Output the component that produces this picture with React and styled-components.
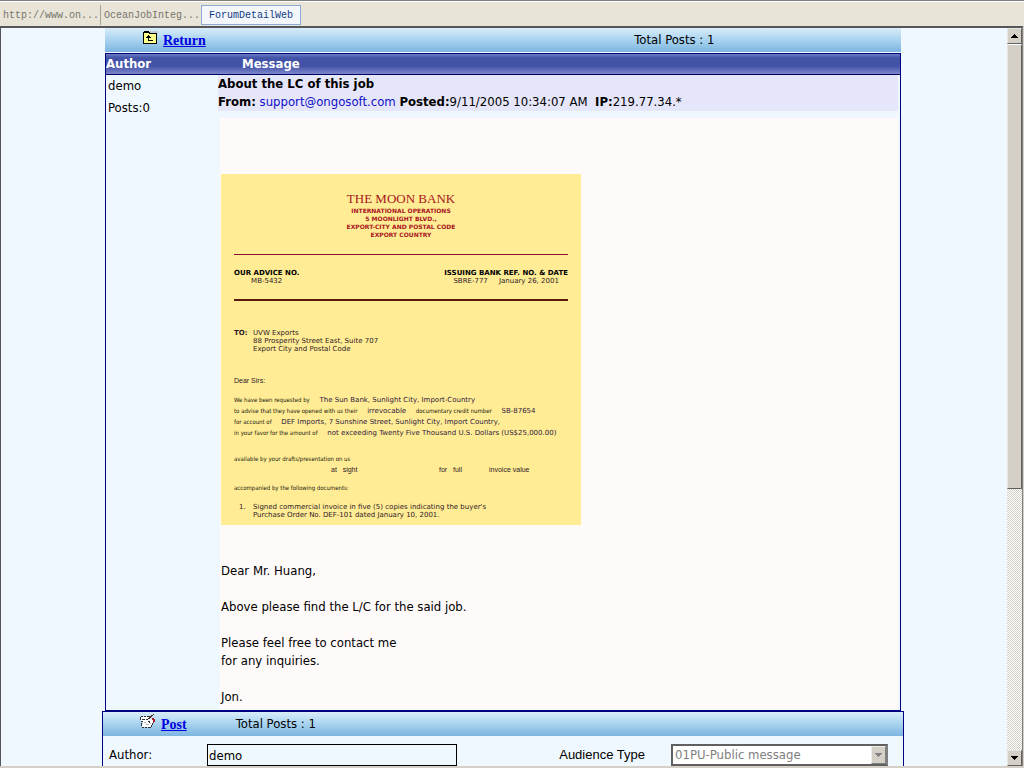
import React from 'react'
import styled, { createGlobalStyle } from 'styled-components'

const tabs = [
  { label: 'http://www.on...', divider: true },
  { label: 'OceanJobInteg...' },
  { label: 'ForumDetailWeb', active: true },
]

const FolderUpIcon = () => (
  <svg width="16" height="16" viewBox="0 0 16 16" shapeRendering="crispEdges" aria-hidden="true">
    <path d="M8 1h8v2H8z" fill="#c4ccd0" />
    <path d="M1 2h1V1h5v1h1v1h7v11H1z" fill="#000" />
    <path d="M2 3h5v1h7v9H2z" fill="#ffff8c" />
    <path d="M6 5h1v1h1v1h1v1H7v2h4v1H6V8H4V7h1V6h1z" fill="#000" />
  </svg>
)

const WriteIcon = () => (
  <svg width="16" height="16" viewBox="0 0 16 16" shapeRendering="crispEdges" aria-hidden="true">
    <path d="M1 3h9v2h3v4h-1v4H2v-3h1V7H1z" fill="#fff" />
    <path d="M1 2h2v1H1zM4 2h2v1H4zM7 2h3v1H7zM0 3h1v3H0zM2 5h3v1H2zM6 5h2v1H6zM1 7h2v1H1zM1 9h1v3H1zM2 13h2v1H2zM5 13h2v1H5zM8 13h3v1H8zM11 11h1v2h-1zM8 7h2v1H8zM9 8h1v1H9zM12 9h1v2h-1z" fill="#333" />
    <path d="M4 8h2v1H4zM6 10h3v1H6zM10 9h1v1h-1z" fill="#b8b4b0" />
    <path d="M13 0h1v1h-1v1h-1v1h-1v1h-1v1H8V4h1V3h1V2h1V1h2z" fill="#5c2a2a" />
    <path d="M12 4h2v1h1v3h-1v1h-1V6h-1z" fill="#a82028" />
  </svg>
)

const Arrow = ({ up, color = '#000' }) => (
  <svg width="7" height="4" viewBox="0 0 7 4" shapeRendering="crispEdges" aria-hidden="true">
    <path d={up ? 'M3 0h1v1h1v1h1v1h1v1H0V3h1V2h1V1h1z' : 'M0 0h7v1H6v1H5v1H4v1H3V3H2V2H1V1H0z'} fill={color} />
  </svg>
)

const BankLetter = () => (
  <Letter>
    <LetterHead>
      <h2>THE MOON BANK</h2>
      <p>INTERNATIONAL OPERATIONS</p>
      <p>5 MOONLIGHT BLVD.,</p>
      <p>EXPORT-CITY AND POSTAL CODE</p>
      <p>EXPORT COUNTRY</p>
    </LetterHead>
    <Refs>
      <div>
        <b>OUR ADVICE NO.</b>
        <span>MB-5432</span>
      </div>
      <div>
        <b>ISSUING BANK REF. NO. &amp; DATE</b>
        <span>SBRE-777 &nbsp; &nbsp; January 26, 2001</span>
      </div>
    </Refs>
    <Recipient>
      <b>TO:</b>
      <div>
        UVW Exports<br />
        88 Prosperity Street East, Suite 707<br />
        Export City and Postal Code
      </div>
    </Recipient>
    <Salutation>Dear Sirs:</Salutation>
    <Terms>
      <Term>We have been requested by <Typed>The Sun Bank, Sunlight City, Import-Country</Typed></Term>
      <Term>to advise that they have opened with us their <Typed>irrevocable</Typed> documentary credit number <Typed>SB-87654</Typed></Term>
      <Term>for account of <Typed>DEF Imports, 7 Sunshine Street, Sunlight City, Import Country,</Typed></Term>
      <Term>in your favor for the amount of <Typed>not exceeding Twenty Five Thousand U.S. Dollars (US$25,000.00)</Typed></Term>
    </Terms>
    <Drafts>
      <Term>available by your drafts/presentation on us</Term>
      <Sight>
        <span>at &nbsp; sight</span>
        <span>for &nbsp; full</span>
        <span>invoice value</span>
      </Sight>
    </Drafts>
    <Accompanied>accompanied by the following documents:</Accompanied>
    <Documents>
      <span>1.</span>
      <div>
        Signed commercial invoice in five (5) copies indicating the buyer's<br />
        Purchase Order No. DEF-101 dated January 10, 2001.
      </div>
    </Documents>
  </Letter>
)

const App = () => {
  return (
    <Window>
      <GlobalStyle />
      <TabBar>
        {tabs.map((tab) => (
          <Tab key={tab.label} type="button" $active={tab.active} $divider={tab.divider}>{tab.label}</Tab>
        ))}
      </TabBar>

      <Viewport>
        <Page>
          <Thread>
            <ActionBar $split="66.5%" $indent="37px">
              <ActionLink href="#return"><FolderUpIcon /><span>Return</span></ActionLink>
              <span>Total Posts : 1</span>
            </ActionBar>
            <Posts>
              <thead>
                <tr>
                  <th scope="col">Author</th>
                  <th scope="col">Message</th>
                </tr>
              </thead>
              <tbody>
                <tr>
                  <AuthorCell>
                    <p>demo</p>
                    <p>Posts:0</p>
                  </AuthorCell>
                  <MessageCell>
                    <MessageHead>
                      <strong>About the LC of this job</strong>
                      <div>
                        <b>From:</b> <a href="mailto:support@ongosoft.com">support@ongosoft.com</a>
                        &nbsp;<b>Posted:</b>9/11/2005 10:34:07 AM &nbsp;<b>IP:</b>219.77.34.*
                      </div>
                    </MessageHead>
                    <MessageBody>
                      <BankLetter />
                      <p>Dear Mr. Huang,</p>
                      <p>Above please find the L/C for the said job.</p>
                      <p>Please feel free to contact me<br />for any inquiries.</p>
                      <p>Jon.</p>
                    </MessageBody>
                  </MessageCell>
                </tr>
              </tbody>
            </Posts>
          </Thread>

          <PostPanel>
            <ActionBar $split="16.6%" $indent="37px">
              <ActionLink href="#post"><WriteIcon /><span>Post</span></ActionLink>
              <span>Total Posts : 1</span>
            </ActionBar>
            <FormRow>
              <label htmlFor="author">Author:</label>
              <TextInput id="author" defaultValue="demo" />
              <AudienceLabel htmlFor="audience">Audience Type</AudienceLabel>
              <SelectBox>
                <select id="audience" disabled>
                  <option>01PU-Public message</option>
                </select>
                <SelectArrow><Arrow color="#808080" /></SelectArrow>
              </SelectBox>
            </FormRow>
          </PostPanel>
        </Page>

        <ScrollBar>
          <ScrollButton type="button" aria-label="Scroll up"><Arrow up /></ScrollButton>
          <Track><Thumb /></Track>
          <ScrollButton type="button" aria-label="Scroll down"><Arrow /></ScrollButton>
        </ScrollBar>
      </Viewport>
    </Window>
  )
}

const GlobalStyle = createGlobalStyle`
  * {
    box-sizing: border-box;
  }

  body {
    margin: 0;
    color: #000;
    font-family: "DejaVu Sans Condensed", "DejaVu Sans", sans-serif;
    font-size: 13px;
    line-height: 18px;
  }

  p, h2 {
    margin: 0;
  }
`

const Window = styled.div`
  height: 100vh;
  display: flex;
  flex-direction: column;
  background: #d4d0c8;
  overflow: hidden;
`

const TabBar = styled.nav`
  flex: none;
  height: 26px;
  display: flex;
  align-items: flex-end;
  padding-bottom: 1px;
  background: #e8e4d8;
  border-top: 1px solid #808080;
  box-shadow: inset 0 1px #fff;
`

const Tab = styled.button`
  height: 20px;
  padding: 0 1px 0 3px;
  border: 0;
  background: transparent;
  color: #77746a;
  font: 10px "Liberation Mono", monospace;

  ${({ $divider }) => $divider && `
    border-right: 1px solid #a5a294;
  `}

  ${({ $active }) => $active && `
    padding: 0 7px;
    border: 1px solid #8eaad6;
    background: #f3f6fa;
    color: #123a86;
  `}
`

const Viewport = styled.div`
  flex: 1;
  min-height: 0;
  display: flex;
  margin: 0 1px 2px 0;
  border: solid #55555a;
  border-width: 2px 1px 0;
  border-right-color: #808080;
  background: #f0f8ff;
`

const Page = styled.main`
  flex: 1;
  min-width: 0;
  overflow: hidden;
  display: flex;
  flex-direction: column;
  align-items: center;
  padding-right: 2px;
`

const Thread = styled.section`
  flex: none;
  width: 100%;
  max-width: 796px;
`

const ActionBar = styled.div`
  display: grid;
  grid-template-columns: ${({ $split }) => $split} 1fr;
  align-items: center;
  height: 24px;
  padding-bottom: 1px;
  background: linear-gradient(#d8edfa, #a8d3ef 50%, #7db5e0);

  a {
    padding-left: ${({ $indent }) => $indent};
  }
`

const ActionLink = styled.a`
  display: flex;
  align-items: center;
  gap: 5px;
  color: #0000e0;
  font: bold 14px/20px "Liberation Serif", serif;
  text-decoration: none;

  svg {
    margin-bottom: 4px;
  }

  span {
    padding-top: 3px;
    text-decoration: underline;
  }
`

const Posts = styled.table`
  width: 100%;
  margin-top: 1px;
  table-layout: fixed;
  border-spacing: 0;
  border: 1px solid #000080;

  th {
    height: 21px;
    padding: 0;
    border-bottom: 1px solid #000060;
    background: linear-gradient(#6b7cc4, #4252a6 20%, #4252a6 60%, #7d86cc);
    color: #fff;
    line-height: 18px;
    text-align: left;
  }

  th:first-child {
    width: 112px;
  }

  th:last-child {
    padding-left: 24px;
  }

  td {
    padding: 0;
    vertical-align: top;
  }
`

const AuthorCell = styled.td`
  line-height: 22px;

  p {
    padding-left: 2px;
  }
`

const MessageCell = styled.td`
  padding-bottom: 1px;
`

const MessageHead = styled.header`
  margin-right: 2px;
  background: #e6e6fa;
  white-space: nowrap;

  a {
    color: #1010c8;
    text-decoration: none;
  }
`

const MessageBody = styled.article`
  margin: 7px 2px 0;
  padding: 56px 0 4px 1px;
  background: #fffafa;

  p + p {
    margin-top: 18px;
  }
`

const Letter = styled.section`
  width: 360px;
  max-width: 100%;
  margin-bottom: 37px;
  padding: 18px 13px 6px;
  background: #ffec94;
  color: #302028;
  font-family: "DejaVu Sans", sans-serif;
  font-size: 7px;
  line-height: 8px;
  white-space: nowrap;

  && p {
    margin: 0;
  }
`

const LetterHead = styled.header`
  padding-bottom: 15px;
  border-bottom: 1px solid #8b1030;
  color: #a81420;
  font: bold 6px/8px "DejaVu Sans", sans-serif;
  text-align: center;

  h2 {
    margin-bottom: 1px;
    font: 13px/14px "Liberation Serif", serif;
  }
`

const Refs = styled.div`
  display: flex;
  justify-content: space-between;
  padding: 14px 0;
  border-bottom: 2px solid #5a1a10;
  text-align: center;

  b, span {
    display: block;
  }

  b {
    color: #000;
  }
`

const Recipient = styled.div`
  display: grid;
  grid-template-columns: 19px 1fr;
  padding-top: 28px;
`

const Salutation = styled.p`
  padding: 24px 0 9px;
  font-family: "Liberation Sans", sans-serif;
`

const Terms = styled.div`
  line-height: 11px;
`

const Term = styled.div`
  color: #201810;
  font-family: "DejaVu Sans Condensed", "DejaVu Sans", sans-serif;
  font-size: 6px;
`

const Typed = styled.span`
  margin: 0 8px;
  color: #302040;
  font-family: "DejaVu Sans", sans-serif;
  font-size: 7px;
  line-height: 8px;
`

const Drafts = styled.div`
  padding-top: 15px;
  line-height: 11px;
`

const Sight = styled.div`
  display: grid;
  grid-template-columns: 108px 50px 1fr;
  padding-left: 97px;
  font-family: "Liberation Sans", sans-serif;
`

const Accompanied = styled(Term)`
  padding: 9px 0 11px;
`

const Documents = styled.div`
  display: grid;
  grid-template-columns: 14px 1fr;
  padding-left: 5px;
`

const PostPanel = styled.section`
  flex: none;
  width: 100%;
  max-width: 802px;
  border: 1px solid #000080;
`

const FormRow = styled.form`
  display: grid;
  grid-template-columns: 98px 250px 1fr 217px;
  align-items: center;
  padding: 8px 15px 8px 6px;
`

const AudienceLabel = styled.label`
  justify-self: end;
  padding-right: 26px;
  font-family: "Liberation Sans", sans-serif;
`

const TextInput = styled.input`
  height: 22px;
  min-width: 0;
  padding: 0 1px;
  border: 1px solid #000;
  border-radius: 0;
  background: #f0f8ff;
  font: inherit;
`

const SelectBox = styled.div`
  position: relative;

  select {
    width: 100%;
    height: 22px;
    padding: 0 20px 0 2px;
    appearance: none;
    border: 2px solid #606060;
    border-right-color: #808080;
    border-radius: 0;
    background: #fff;
    color: #808080;
    font: inherit;
    opacity: 1;
  }
`

const SelectArrow = styled.span`
  position: absolute;
  top: 2px;
  right: 2px;
  bottom: 2px;
  width: 15px;
  display: grid;
  place-items: center;
  background: #d4d0c8;
  border: 1px solid;
  border-color: #f0eee8 #808080 #808080 #f0eee8;
  pointer-events: none;
`

const ScrollBar = styled.aside`
  flex: none;
  width: 15px;
  display: flex;
  flex-direction: column;
`

const ScrollButton = styled.button`
  flex: none;
  height: 16px;
  padding: 0;
  display: grid;
  place-items: center;
  background: #d4d0c8;
  border: 1px solid;
  border-color: #e8e6e0 #606060 #606060 #e8e6e0;
`

const Track = styled.div`
  flex: 1;
  background: repeating-conic-gradient(#d4d0c8 0 25%, #fff 0 50%) 0 0 / 2px 2px;
`

const Thumb = styled.div`
  height: 63%;
  background: #d4d0c8;
  border: 1px solid;
  border-color: #fff #606060 #606060 #e8e6e0;
`

export default App
